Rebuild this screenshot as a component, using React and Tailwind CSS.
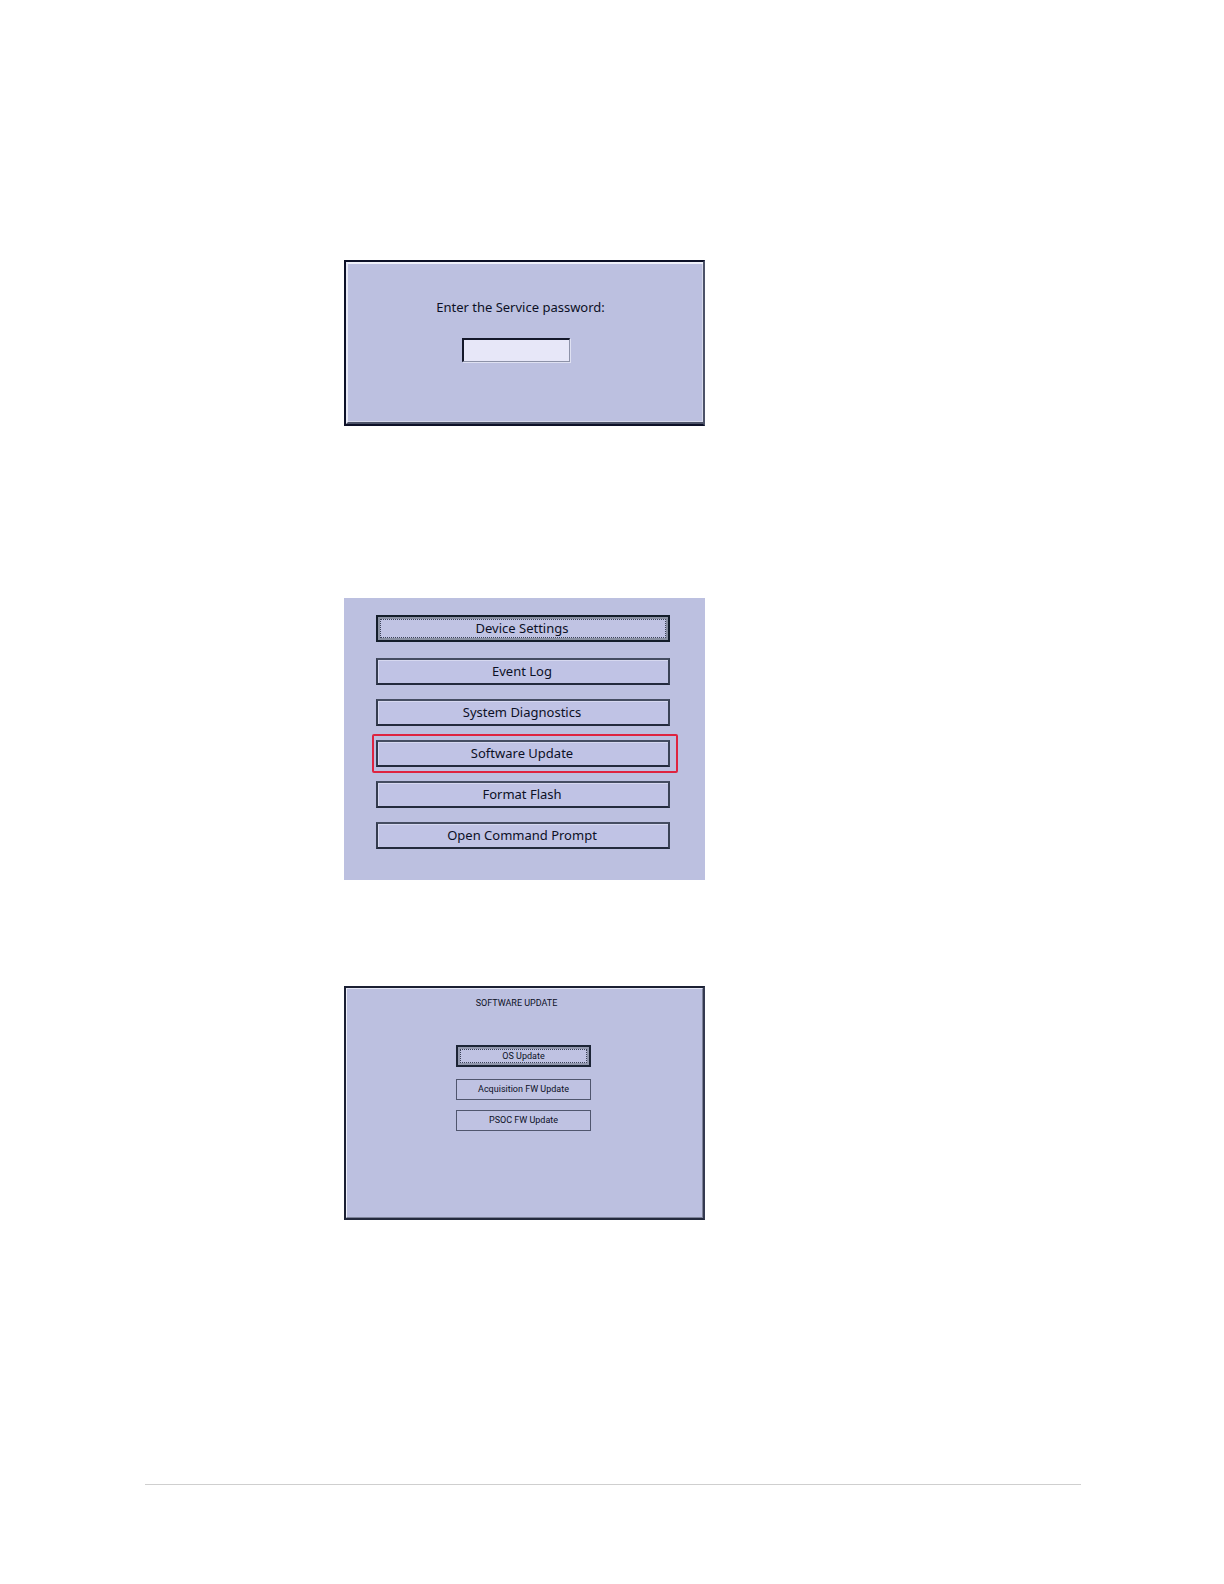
const menuItems = [
  { label: "Device Settings", focused: true },
  { label: "Event Log" },
  { label: "System Diagnostics" },
  { label: "Software Update", highlighted: true },
  { label: "Format Flash" },
  { label: "Open Command Prompt" },
];

function FocusRing() {
  return (
    <span className="pointer-events-none absolute inset-0.5 border border-dotted border-[#3b4258]" />
  );
}

function MenuButton({ label, focused, highlighted }) {
  return (
    <li className="relative">
      <button
        type="button"
        className={
          focused
            ? "relative mb-0.5 block h-[27px] w-full border-2 border-[#131d2a] bg-[#c0c3e3] pr-0.5 pb-0.5 text-center text-[13px] leading-5 shadow-[inset_0_0_0_2px_#8990a2]"
            : "relative block h-[27px] w-full border-2 border-t-[#454d62] border-r-[#3a4256] border-b-[#232a3d] border-l-[#343c4f] bg-[#c0c3e5] pr-0.5 pb-0.5 text-center text-[13px] leading-5 shadow-[inset_1px_1px_0_0_#d6d8f0]"
        }
      >
        {label}
        {focused && <FocusRing />}
      </button>
      {highlighted && (
        <span className="pointer-events-none absolute -top-1.5 -right-2 -bottom-1.5 -left-1 rounded-xs border-2 border-[#de2440]" />
      )}
    </li>
  );
}

function PasswordPanel() {
  return (
    <section className="w-full border-2 border-[#0d1128] border-r-[#4c5268]">
      <form
        className="flex flex-col items-center border-t-2 border-b-2 border-l-2 border-t-[#eef0fa] border-b-[#4c5268] border-l-[#e6e8f6] bg-[#bcc0e0] pt-[33px] pr-2.5 pb-[60px] shadow-[inset_-1px_-1px_0_0_#d5d8ea]"
        onSubmit={(e) => e.preventDefault()}
      >
        <label htmlFor="service-password" className="text-[13px] leading-5">
          Enter the Service password:
        </label>
        <input
          id="service-password"
          type="password"
          className="mt-[21px] mr-2.5 h-6 w-[108px] border-t-2 border-r border-b border-l-2 border-t-[#14182a] border-r-[#8d92a8] border-b-[#8d92a8] border-l-[#14182a] bg-[#e7e7f8] px-1 shadow-[1px_1px_0_0_#dfe1f2] outline-none"
        />
      </form>
    </section>
  );
}

function MenuPanel() {
  return (
    <nav className="w-full bg-[#bcc0e0] pt-[17px] pr-[35px] pb-[31px] pl-8">
      <ul className="flex flex-col gap-3.5">
        {menuItems.map((item) => (
          <MenuButton key={item.label} {...item} />
        ))}
      </ul>
    </nav>
  );
}

function UpdatePanel() {
  return (
    <section className="w-full border-2 border-t-[#1b2033] border-r-[#343a50] border-b-[#242a3e] border-l-[#1b2033]">
      <div className="flex flex-col items-center border border-t-[#e4e6f5] border-r-[#7d8299] border-b-[#7d8299] border-l-[#eceefa] bg-[#bcc0e0] pt-1.5 pr-0.5 pb-[86px] font-[Roboto,sans-serif] text-[9px]">
        <h2 className="mr-3.5 leading-4">SOFTWARE UPDATE</h2>
        <div className="mt-[34px] flex w-[135px] flex-col gap-2.5">
          <button
            type="button"
            className="relative mb-0.5 h-[22px] border-2 border-[#1c2436] bg-[#bfc2e2] leading-[18px] shadow-[inset_0_0_0_2px_#9298ae]"
          >
            OS Update
            <FocusRing />
          </button>
          <button
            type="button"
            className="h-[21px] border border-[#50566e] bg-[#bfc2e2] leading-[19px]"
          >
            Acquisition FW Update
          </button>
          <button
            type="button"
            className="h-[21px] border border-[#50566e] bg-[#bfc2e2] leading-[19px]"
          >
            PSOC FW Update
          </button>
        </div>
      </div>
    </section>
  );
}

export default function App() {
  return (
    <div className="min-h-screen bg-white pr-[143px] pl-[145px] font-['Noto_Sans',sans-serif] text-[#0c1026]">
      <main className="ml-[199px] max-w-[361px] pt-[260px]">
        <PasswordPanel />
        <div className="mt-[172px]">
          <MenuPanel />
        </div>
        <div className="mt-[106px]">
          <UpdatePanel />
        </div>
      </main>
      <hr className="mt-[264px] border-t border-[#cfcfcf]" />
    </div>
  );
}
